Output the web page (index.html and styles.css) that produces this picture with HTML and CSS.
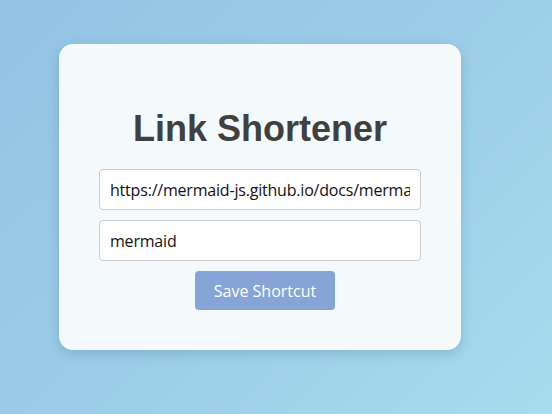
FILE: index.html
```html
<!DOCTYPE html>
<html>
<head>
<meta charset="utf-8">
<link rel="stylesheet" href="styles.css">
</head>
<body>
<div class="page">
  <div class="card">
    <h1 class="title">Link Shortener</h1>
    <input class="field" type="text" value="https://mermaid-js.github.io/docs/mermaid">
    <input class="field" type="text" value="mermaid">
    <button class="save">Save Shortcut</button>
  </div>
</div>
</body>
</html>
```
FILE: styles.css
```css
html, body {
  margin: 0;
  padding: 0;
  height: 100%;
}
body {
  background: linear-gradient(135deg, #93c3e3 0%, #9bcde8 50%, #a7dcee 100%);
  font-family: "Open Sans", "Noto Sans", sans-serif;
}
.page {
  padding: 44px 0 0 59px;
}
.card {
  width: 322px;
  padding: 40px;
  background: #f4f9fc;
  border-radius: 14px;
  box-shadow: 0 4px 12px rgba(40, 80, 110, 0.22);
  display: flex;
  flex-direction: column;
  align-items: center;
  gap: 10px;
}
.title {
  font-family: "Liberation Sans", Arial, sans-serif;
  font-size: 36px;
  font-weight: bold;
  color: #404040;
  line-height: 41px;
  margin: 24px 0 10px;
}
.field {
  box-sizing: border-box;
  width: 322px;
  height: 41px;
  padding: 0 10px;
  border: 1px solid #cccccc;
  border-radius: 4px;
  background: #ffffff;
  font-family: "Open Sans", "Noto Sans", sans-serif;
  font-size: 16px;
  letter-spacing: -0.2px;
  color: #111;
  outline: none;
}
.save {
  width: 140px;
  height: 39px;
  margin-left: 10px;
  border: none;
  border-radius: 4px;
  background: #86a5d6;
  color: #ffffff;
  font-family: "Open Sans", "Noto Sans", sans-serif;
  font-size: 16px;
  padding: 0;
}
```
